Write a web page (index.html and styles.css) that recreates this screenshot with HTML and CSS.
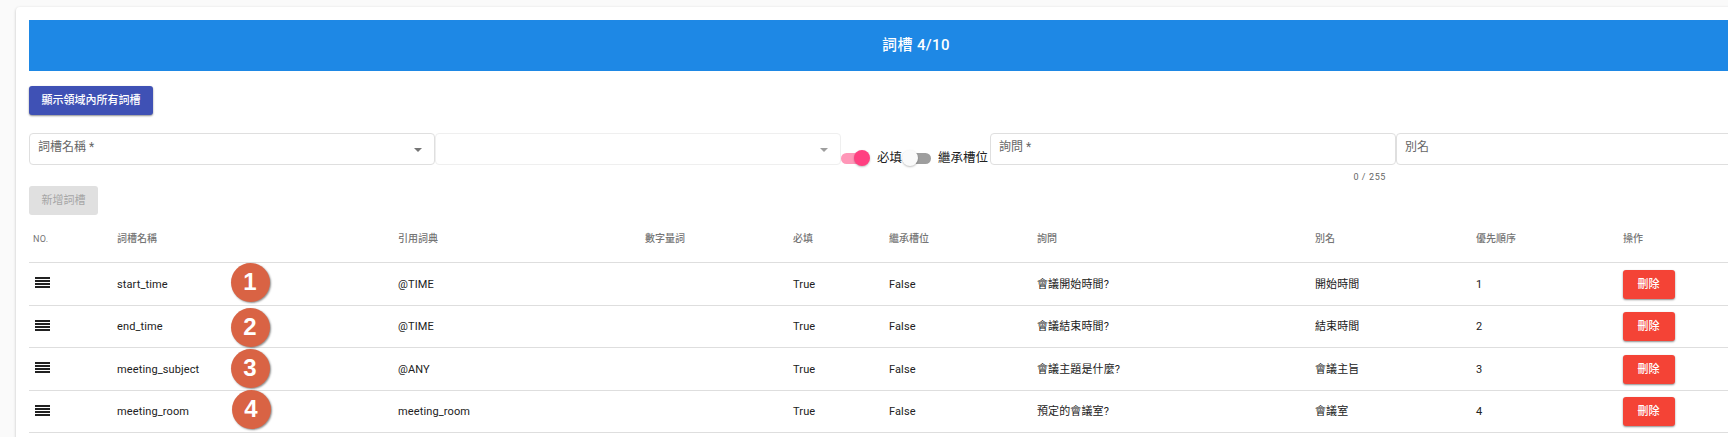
FILE: index.html
```html
<!DOCTYPE html>
<html lang="zh-Hant">
<head>
<meta charset="utf-8">
<title>詞槽</title>
<link rel="stylesheet" href="styles.css">
</head>
<body>
<main class="card">
  <h1 class="banner">詞槽 4/10</h1>
  <button class="btn btn-primary">顯示領域內所有詞槽</button>
  <div class="form">
    <div class="field"><span>詞槽名稱 *</span><i class="caret"></i></div>
    <div class="field field-off"><i class="caret"></i></div>
    <div class="toggle on"><i class="track"><b class="thumb"></b></i><span>必填</span></div>
    <div class="toggle"><i class="track"><b class="thumb"></b></i><span>繼承槽位</span></div>
    <div class="field-group">
      <div class="field"><span>詢問 *</span></div>
      <div class="hint">0 / 255</div>
    </div>
    <div class="field"><span>別名</span></div>
  </div>
  <button class="btn btn-disabled">新增詞槽</button>
  <section class="table">
    <div class="row head"><span>NO.</span><span>詞槽名稱</span><span>引用詞典</span><span>數字量詞</span><span>必填</span><span>繼承槽位</span><span>詢問</span><span>別名</span><span>優先順序</span><span>操作</span></div>
    <div class="row"><svg class="grip" viewBox="0 0 15 11"><path d="M0 0h15v2H0zM0 3h15v2H0zM0 6h15v2H0zM0 9h15v2H0z"/></svg><span>start_time</span><span>@TIME</span><span></span><span>True</span><span>False</span><span>會議開始時間?</span><span>開始時間</span><span>1</span><button class="btn btn-warn">刪除</button><b class="badge badge-1">1</b></div>
    <div class="row"><svg class="grip" viewBox="0 0 15 11"><path d="M0 0h15v2H0zM0 3h15v2H0zM0 6h15v2H0zM0 9h15v2H0z"/></svg><span>end_time</span><span>@TIME</span><span></span><span>True</span><span>False</span><span>會議結束時間?</span><span>結束時間</span><span>2</span><button class="btn btn-warn">刪除</button><b class="badge badge-2">2</b></div>
    <div class="row"><svg class="grip" viewBox="0 0 15 11"><path d="M0 0h15v2H0zM0 3h15v2H0zM0 6h15v2H0zM0 9h15v2H0z"/></svg><span>meeting_subject</span><span>@ANY</span><span></span><span>True</span><span>False</span><span>會議主題是什麼?</span><span>會議主旨</span><span>3</span><button class="btn btn-warn">刪除</button><b class="badge badge-3">3</b></div>
    <div class="row"><svg class="grip" viewBox="0 0 15 11"><path d="M0 0h15v2H0zM0 3h15v2H0zM0 6h15v2H0zM0 9h15v2H0z"/></svg><span>meeting_room</span><span>meeting_room</span><span></span><span>True</span><span>False</span><span>預定的會議室?</span><span>會議室</span><span>4</span><button class="btn btn-warn">刪除</button><b class="badge badge-4">4</b></div>
  </section>
</main>
</body>
</html>
```
FILE: styles.css
```css
* { box-sizing: border-box; }
html { overflow: hidden; }
body {
  margin: 0;
  padding: 7px 0 0 16px;
  height: 437px;
  overflow: hidden;
  background: #fafafa;
  color: #212121;
  font-family: Roboto, "Noto Sans CJK TC", sans-serif;
  font-size: 11px;
}
.card {
  width: 1800px;
  height: 500px;
  padding: 13px;
  background: #fff;
  border-radius: 4px;
  box-shadow: 0 1px 3px rgba(0,0,0,.24);
}
.banner {
  width: 1774px;
  height: 51px;
  margin: 0 0 15px;
  background: #1e88e5;
  color: #fff;
  font-size: 15px;
  font-weight: 500;
  letter-spacing: .4px;
  line-height: 51px;
  text-align: center;
}
.btn {
  display: block;
  height: 29px;
  padding: 0;
  border: 0;
  border-radius: 3px;
  color: #fff;
  font: 500 11px/27px Roboto, "Noto Sans CJK TC", sans-serif;
  text-align: center;
  white-space: nowrap;
  box-shadow: 0 1px 2px rgba(0,0,0,.45);
}
.btn-primary { width: 124px; background: #3f51b5; }
.btn-disabled { width: 69px; background: #e0e0e0; color: #a6a6a6; box-shadow: none; font-weight: 400; }
.btn-warn { width: 52px; padding-right: 1px; background: #f44336; }
.form {
  display: flex;
  align-items: flex-start;
  width: 1773px;
  height: 53px;
  margin-top: 18px;
}
.field {
  display: flex;
  justify-content: space-between;
  flex: none;
  width: 406px;
  height: 32px;
  padding: 0 12px 0 8px;
  border: 1px solid #dfdfdf;
  border-radius: 4px;
  color: #666;
  font-size: 12px;
  line-height: 26px;
}
.field-off { justify-content: flex-end; border-color: #efefef; }
.caret {
  width: 8px;
  height: 4px;
  margin-top: 14px;
  background: #757575;
  clip-path: polygon(0 0, 100% 0, 50% 100%);
}
.field-off .caret { background: #9e9e9e; }
.field-group { width: 406px; margin-left: auto; }
.hint {
  padding: 5px 10px 0 0;
  color: #666;
  font-size: 9px;
  letter-spacing: .6px;
  line-height: 14px;
  text-align: right;
}
.toggle {
  display: flex;
  align-items: center;
  height: 20px;
  margin-top: 15px;
  font-size: 12.5px;
  line-height: 20px;
  white-space: nowrap;
}
.toggle + .toggle { margin-left: 1px; }
.track {
  display: flex;
  align-items: center;
  width: 28px;
  height: 11px;
  margin-right: 8px;
  border-radius: 6px;
  background: #9e9e9e;
}
.thumb {
  flex: none;
  width: 16px;
  height: 16px;
  margin-left: -1px;
  border-radius: 50%;
  background: #fafafa;
  box-shadow: 0 1px 2px rgba(0,0,0,.25);
}
.toggle + .toggle .track { margin-right: 7px; }
.on .track { background: #ff97b8; }
.on .thumb { margin-left: 13px; background: #ff4081; }
.table { width: 1774px; }
.row {
  position: relative;
  display: grid;
  grid-template-columns: 84px 281px 247px 148px 96px 148px 278px 161px 147px 1fr;
  align-items: center;
  height: 42.5px;
  padding: 1px 0 0 4px;
  border-bottom: 1px solid #dedede;
  letter-spacing: .12px;
  line-height: 20px;
}
.row span { padding-top: 1px; }
.head {
  height: 48px;
  color: #757575;
  font-size: 10px;
  font-weight: 500;
  letter-spacing: 0;
}
.head span { padding-top: 0; }
.head span:first-child { font-size: 9px; font-weight: 400; letter-spacing: .3px; }
.grip { width: 15px; height: 11px; margin: -3px 0 0 2px; fill: #212121; }
.badge {
  position: absolute;
  left: 201.5px;
  width: 39px;
  height: 39px;
  border-radius: 50%;
  background: #d96344;
  color: #fff;
  box-shadow: 1px 1px 2px rgba(0,0,0,.45);
  font: bold 24px/37px "Liberation Sans", sans-serif;
  letter-spacing: 0;
  text-align: center;
}
.badge-1 { top: 0; }
.badge-2 { top: 2.5px; }
.badge-3 { top: 1px; }
.badge-4 { top: -.5px; left: 202.5px; }
```
